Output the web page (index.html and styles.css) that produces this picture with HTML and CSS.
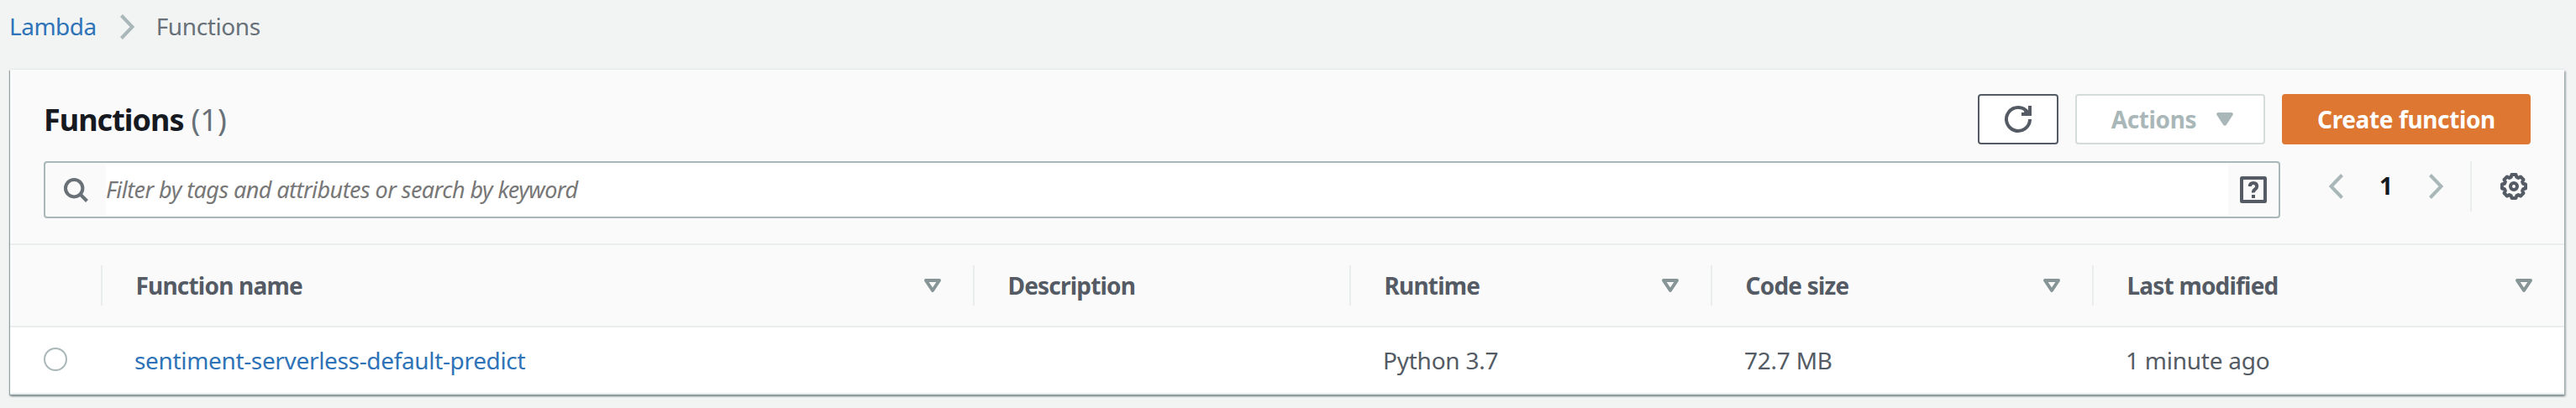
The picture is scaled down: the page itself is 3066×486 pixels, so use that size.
FILE: index.html
```html
<!DOCTYPE html>
<html lang="en">
<head>
<meta charset="utf-8">
<title>Functions - Lambda</title>
<link rel="stylesheet" href="styles.css">
</head>
<body>
<nav class="breadcrumb">
  <a class="link crumb-root">Lambda</a>
  <svg class="crumb-sep" width="20" height="32" viewBox="0 0 20 32"><path d="M2.500 2.500 15.500 16 2.500 29.500"/></svg>
  <span class="crumb-current">Functions</span>
</nav>
<main class="panel">
  <header class="panel-head">
    <div class="title-row">
      <h1 class="title"><span class="title-name">Functions</span><span class="count">(1)</span></h1>
      <div class="actions">
        <button class="btn btn-refresh" aria-label="Refresh">
          <svg width="32" height="32" viewBox="0 0 32 32"><path d="M30 16A14 14 0 1 1 27.500 8M30 0V10H20M24 6 28 9"/></svg>
        </button>
        <button class="btn btn-menu" disabled><span>Actions</span><svg width="20" height="16" viewBox="0 0 20 16"><path d="M2 0H18Q20.800 .6 19.500 3L12 14.500Q10 17.200 8 14.500L.5 3Q-.8 .6 2 0Z"/></svg></button>
        <button class="btn btn-primary">Create function</button>
      </div>
    </div>
    <div class="filter-row">
      <div class="search">
        <span class="search-icon"><svg width="32" height="32" viewBox="0 0 32 32"><circle cx="13.200" cy="14.200" r="10.200"/><path d="M20.500 21.500 28.500 29.500"/></svg></span>
        <span class="search-input">Filter by tags and attributes or search by keyword</span>
        <span class="search-help"><svg width="32" height="32" viewBox="0 0 32 32"><rect x="2" y="2" width="28" height="28" rx=".5"/><path d="M11.800 12Q11.800 8 16 8T20.200 12Q20.200 14 18 15.500T16 19.500"/><path d="M14 24H18"/></svg></span>
      </div>
      <div class="pager">
        <svg class="chev" width="20" height="32" viewBox="0 0 20 32"><path d="M17.500 2.500 4.500 16 17.500 29.500"/></svg>
        <span class="page">1</span>
        <svg class="chev" width="20" height="32" viewBox="0 0 20 32"><path d="M2.500 2.500 15.500 16 2.500 29.500"/></svg>
        <span class="pager-line"></span>
        <svg class="gear" width="32" height="32" viewBox="0 0 32 32"><path d="M13.500 2H18.500L19.300 5 21.300 5.900 24 4.500 27.500 8 26.100 10.700 27 12.700 30 13.500V18.500L27 19.300 26.100 21.300 27.500 24 24 27.500 21.300 26.100 19.300 27 18.500 30H13.500L12.700 27 10.700 26.100 8 27.500 4.500 24 5.900 21.300 5 19.300 2 18.500V13.500L5 12.700 5.900 10.700 4.500 8 8 4.500 10.700 5.900 12.700 5Z"/><circle cx="16" cy="16" r="4"/></svg>
      </div>
    </div>
  </header>
  <div class="grid grid-head">
    <div class="cell"></div>
    <div class="cell">Function name<svg class="sort" width="20" height="16" viewBox="0 0 20 16"><path d="M2 2H18L10 14Z"/></svg></div>
    <div class="cell">Description</div>
    <div class="cell">Runtime<svg class="sort" width="20" height="16" viewBox="0 0 20 16"><path d="M2 2H18L10 14Z"/></svg></div>
    <div class="cell">Code size<svg class="sort" width="20" height="16" viewBox="0 0 20 16"><path d="M2 2H18L10 14Z"/></svg></div>
    <div class="cell">Last modified<svg class="sort" width="20" height="16" viewBox="0 0 20 16"><path d="M2 2H18L10 14Z"/></svg></div>
  </div>
  <div class="grid grid-row">
    <div class="cell"><span class="radio"></span></div>
    <div class="cell"><a class="link name">sentiment-serverless-default-predict</a></div>
    <div class="cell"></div>
    <div class="cell">Python 3.7</div>
    <div class="cell">72.7 MB</div>
    <div class="cell">1 minute ago</div>
  </div>
</main>
</body>
</html>
```
FILE: styles.css
```css
* { box-sizing: border-box; }
body {
  margin: 0;
  height: 486px;
  overflow: hidden;
  background: #f2f4f4;
  color: #545b64;
  font: 28px/44px "Noto Sans", "Open Sans", sans-serif;
}
svg { display: block; flex: none; fill: none; overflow: visible; }
.link { color: #2e73b8; text-decoration: none; }
.breadcrumb { display: flex; align-items: center; height: 83px; padding: 0 0 19px 11px; }
.crumb-root { padding-bottom: 2px; letter-spacing: -.5px; }
.crumb-sep { margin: 0 24px 0 27px; stroke: #aab7b8; stroke-width: 4; }
.crumb-current { padding-bottom: 2px; color: #687078; letter-spacing: -.4px; }
.panel {
  width: 3040px;
  height: 387px;
  margin-left: 12px;
  background: #fff;
  box-shadow: 0 2px 2px #879596, 2px 2px 2px rgba(0,28,36,.3), -1px 1px 1px rgba(0,28,36,.35), 0 -1px 1px #e6e9e9;
}
.panel-head { height: 209px; padding: 29px 40px 0; background: #fafafa; border-bottom: 2px solid #eaeded; }
.title-row { display: flex; justify-content: space-between; height: 60px; margin-bottom: 20px; }
.title { display: flex; gap: 9px; margin: 0; font-size: 36px; line-height: 62px; color: #16191f; }
.title-name { letter-spacing: -1px; }
.count { font-weight: 400; color: #687078; }
.actions { display: flex; gap: 20px; }
.btn {
  display: flex; align-items: center; justify-content: center;
  height: 60px; padding: 0; border: 2px solid #545b64; border-radius: 4px;
  background: #fff; color: #545b64; font: 700 28px/44px "Noto Sans", "Open Sans", sans-serif;
  letter-spacing: -.38px;
}
.btn-refresh { width: 96px; }
.btn-refresh svg { stroke: #545b64; stroke-width: 4; }
.btn-menu { width: 226px; padding-left: 5px; gap: 24px; border-color: #d5dbdb; color: #aab7b8; }
.btn-menu svg { fill: #aab7b8; }
.btn-primary { width: 296px; border-color: #dd7732; background: #dd7732; color: #fff; }
.filter-row { display: flex; }
.search { display: flex; align-items: center; width: 2662px; height: 68px; border: 2px solid #aab7b8; border-radius: 4px; }
.search-icon { width: 72px; padding-left: 21px; }
.search-icon svg { stroke: #687078; stroke-width: 4; }
.search-input { flex: 1; height: 60px; background: #fff; color: #777; font-size: 27px; font-style: italic; line-height: 60px; letter-spacing: -.56px; }
.search-help { width: 60px; padding-left: 14px; }
.search-help svg { stroke: #545b64; stroke-width: 4; }
.pager { display: flex; align-items: center; height: 60px; padding-left: 56px; }
.chev { stroke: #aab7b8; stroke-width: 4; }
.page { width: 100px; text-align: center; font-weight: 700; color: #16191f; padding-bottom: 2px; }
.pager-line { width: 2px; height: 60px; margin: 0 34px 0 30px; background: #eaeded; }
.gear { stroke: #545b64; stroke-width: 4; stroke-linejoin: round; }
.grid { display: grid; grid-template-columns: 108px 1038px 448px 430px 454px 1fr; align-items: center; }
.cell { display: flex; align-items: center; }
.grid-head { height: 98px; background: #fafafa; border-bottom: 2px solid #eaeded; font-weight: 700; letter-spacing: -.8px; }
.grid-head .cell { height: 48px; padding: 0 38px 0 39.5px; }
.grid-head .cell + .cell { border-left: 2px solid #eaeded; }
.sort { margin-left: auto; stroke: #879596; stroke-width: 4; stroke-linejoin: round; }
.grid-row { height: 80px; border-bottom: 2px solid #eaeded; letter-spacing: -.24px; }
.grid-row .cell { padding-left: 40px; }
.name { letter-spacing: -.34px; }
.radio { width: 28px; height: 28px; margin-bottom: 2px; border: 2px solid #aab7b8; border-radius: 50%; }
```
